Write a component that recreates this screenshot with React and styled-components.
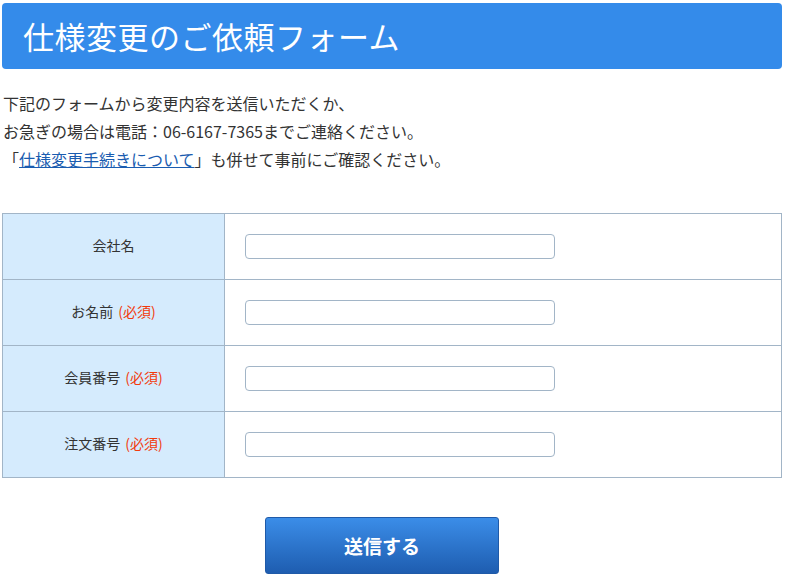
import React from "react";
import styled, { createGlobalStyle } from "styled-components";

const Global = createGlobalStyle`
  html, body { margin: 0; padding: 0; background: #fff; }
  body {
    font-family: "Noto Sans CJK JP", "Noto Sans", sans-serif;
    color: #333;
  }
`;

const Page = styled.div`
  width: 780px;
  padding: 3px 4px 0 2px;
`;

const Header = styled.h1`
  margin: 0;
  height: 66px;
  background: #348bea;
  border-radius: 4px;
  color: #fff;
  font-size: 31px;
  font-weight: 400;
  line-height: 66px;
  padding-left: 21px;
  letter-spacing: 0.5px;
`;

const Intro = styled.p`
  margin: 20px 0 0 1px;
  font-size: 16px;
  line-height: 28px;
  color: #333;
`;

const Link = styled.a`
  color: #1a5cb0;
  text-decoration: underline;
`;

const Table = styled.div`
  margin-top: 40px;
  display: grid;
  grid-template-columns: 222px 1fr;
  border: 1px solid #a2b5c7;
  border-bottom: none;
`;

const Label = styled.div`
  box-sizing: border-box;
  height: 66px;
  padding-bottom: 3px;
  background: #d5ebfd;
  border-bottom: 1px solid #a2b5c7;
  border-right: 1px solid #a2b5c7;
  display: flex;
  align-items: center;
  justify-content: center;
  font-size: 14px;
  color: #333;
`;

const Req = styled.span`
  color: #f23a0c;
  margin-left: 5px;
`;

const Field = styled.div`
  height: 65px;
  border-bottom: 1px solid #a2b5c7;
  display: flex;
  align-items: center;
  padding-left: 20px;
`;

const Input = styled.input`
  box-sizing: border-box;
  width: 310px;
  height: 25px;
  border: 1px solid #a2b5c7;
  border-radius: 4px;
  background: #fff;
  outline: none;
  padding: 0 6px;
`;

const Actions = styled.div`
  display: flex;
  justify-content: center;
  margin-top: 39px;
  padding-right: 20px;
`;

const Submit = styled.button`
  width: 234px;
  height: 57px;
  border: 1px solid #1f5aa8;
  border-radius: 3px;
  background: linear-gradient(#3b8de8, #1e5db0);
  color: #fff;
  font-family: "Noto Sans CJK JP", "Noto Sans", sans-serif;
  font-size: 19px;
  font-weight: 700;
  cursor: pointer;
`;

const rows = [
  { label: "会社名", req: false },
  { label: "お名前", req: true },
  { label: "会員番号", req: true },
  { label: "注文番号", req: true },
];

export default function App() {
  return (
    <>
      <Global />
      <Page>
        <Header>仕様変更のご依頼フォーム</Header>
        <Intro>
          下記のフォームから変更内容を送信いただくか、
          <br />
          お急ぎの場合は電話：06-6167-7365までご連絡ください。
          <br />
          「<Link href="#">仕様変更手続きについて</Link>」も併せて事前にご確認ください。
        </Intro>
        <Table>
          {rows.map((r) => (
            <React.Fragment key={r.label}>
              <Label>
                {r.label}
                {r.req && <Req>(必須)</Req>}
              </Label>
              <Field>
                <Input type="text" />
              </Field>
            </React.Fragment>
          ))}
        </Table>
        <Actions>
          <Submit type="button">送信する</Submit>
        </Actions>
      </Page>
    </>
  );
}
